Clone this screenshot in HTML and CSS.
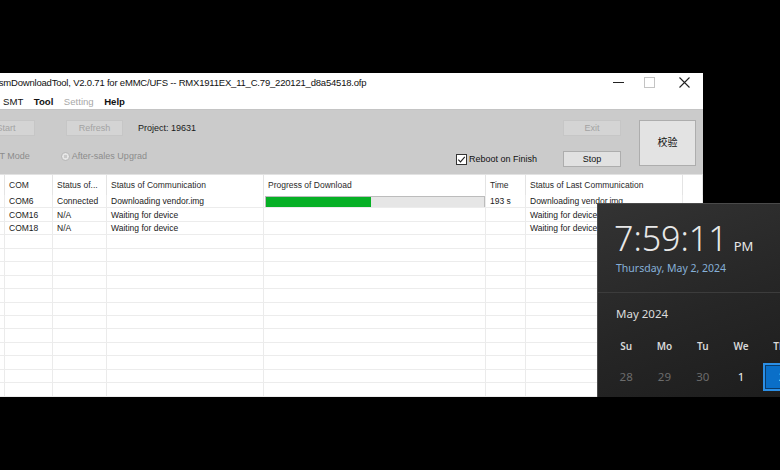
FILE: index.html
```html
<!DOCTYPE html>
<html lang="en">
<head>
    <meta charset="UTF-8">
    <title>MsmDownloadTool</title>
    <link rel="stylesheet" href="styles.css">
</head>
<body>
    <div class="window">
        <div class="titlebar">
            <span class="title">MsmDownloadTool, V2.0.71 for eMMC/UFS -- RMX1911EX_11_C.79_220121_d8a54518.ofp</span>
            <div class="caption">
                <span class="cap-btn cap-min">
                    <svg width="11" height="11" viewBox="0 0 11 11"><path d="M0 5.5h11" stroke="#222" stroke-width="1"/></svg>
                </span>
                <span class="cap-btn cap-max">
                    <svg width="11" height="11" viewBox="0 0 11 11"><rect x="0.5" y="0.5" width="10" height="10" fill="none" stroke="#c4c4c4"/></svg>
                </span>
                <span class="cap-btn cap-close">
                    <svg width="11" height="11" viewBox="0 0 11 11"><path d="M0.5 0.5l10 10M10.5 0.5l-10 10" stroke="#222" stroke-width="1.1"/></svg>
                </span>
            </div>
        </div>

        <div class="menubar">
            <span>SMT</span>
            <span class="menu-bold">Tool</span>
            <span class="menu-off">Setting</span>
            <span class="menu-bold">Help</span>
        </div>

        <div class="toolbar">
            <div class="tool-main">
                <div class="tool-row">
                    <button class="btn btn-off btn-start">Start</button>
                    <button class="btn btn-off btn-refresh">Refresh</button>
                    <span class="project">Project: 19631</span>
                    <button class="btn btn-off btn-exit">Exit</button>
                </div>
                <div class="tool-row">
                    <span class="mode">SMT Mode</span>
                    <label class="radio"><span class="radio-dot"></span>After-sales Upgrad</label>
                    <label class="check">
                        <svg width="11" height="11" viewBox="0 0 11 11"><rect x="0.5" y="0.5" width="10" height="10" fill="#fff" stroke="#333"/><path d="M2.3 5.6l2.2 2.3 4.3-5" fill="none" stroke="#222" stroke-width="1.1"/></svg>
                        Reboot on Finish
                    </label>
                    <button class="btn btn-stop">Stop</button>
                </div>
            </div>
            <button class="btn btn-big">校验</button>
        </div>

        <div class="grid">
            <div class="row head">
                <span></span><span>COM</span><span>Status of...</span><span>Status of Communication</span><span>Progress of Download</span><span>Time</span><span>Status of Last Communication</span><span></span>
            </div>
            <div class="row">
                <span></span><span>COM6</span><span>Connected</span><span>Downloading vendor.img</span>
                <span class="progress-cell"><span class="progress"><span class="progress-fill" style="width: 48%"></span></span></span>
                <span>193 s</span><span>Downloading vendor.img</span><span></span>
            </div>
            <div class="row">
                <span></span><span>COM16</span><span>N/A</span><span>Waiting for device</span><span></span><span></span><span>Waiting for device</span><span></span>
            </div>
            <div class="row">
                <span></span><span>COM18</span><span>N/A</span><span>Waiting for device</span><span></span><span></span><span>Waiting for device</span><span></span>
            </div>
            <div id="emptyRows"></div>
        </div>
    </div>

    <div class="flyout">
        <div class="clock">
            <span class="time">7:59:11</span><span class="ampm">PM</span>
        </div>
        <div class="date">Thursday, May 2, 2024</div>
        <div class="cal">
            <div class="month">May 2024</div>
            <div class="days">
                <span class="dow">Su</span><span class="dow">Mo</span><span class="dow">Tu</span><span class="dow">We</span><span class="dow">Th</span>
                <span class="day other">28</span><span class="day other">29</span><span class="day other">30</span><span class="day">1</span><span class="day today">2</span>
            </div>
        </div>
    </div>

    <script>
        // fill the rest of the list with blank grid rows
        const holder = document.getElementById('emptyRows');
        for (let i = 0; i < 12; i++) {
            const row = document.createElement('div');
            row.className = 'row';
            row.innerHTML = '<span></span>'.repeat(8);
            holder.appendChild(row);
        }
    </script>
</body>
</html>
```

FILE: styles.css
```css
* {
    box-sizing: border-box;
    margin: 0;
    padding: 0;
}

body {
    width: 780px;
    height: 470px;
    overflow: hidden;
    position: relative;
    background-color: #000;
    font-family: "Liberation Sans", Arial, sans-serif;
    color: #111;
}

.window {
    width: 703px;
    height: 324px;
    margin-top: 73px;
    background-color: #fff;
    overflow: hidden;
}

/* title bar */
.titlebar {
    height: 19px;
    display: flex;
    align-items: center;
}

.title {
    flex: 1;
    margin-left: -9px;
    font-size: 9.5px;
    letter-spacing: -0.2px;
    white-space: nowrap;
    overflow: hidden;
}

.caption {
    display: flex;
    height: 19px;
}

.cap-btn {
    display: flex;
    align-items: center;
    justify-content: center;
}

.cap-min { width: 30px; }
.cap-max { width: 32px; }
.cap-close { width: 38px; }

/* menu */
.menubar {
    height: 17px;
    display: flex;
    align-items: center;
    gap: 10.5px;
    padding: 1px 0 0 3px;
    font-size: 9.6px;
}

.menu-bold {
    font-weight: bold;
}

.menu-off {
    color: #a8a8a8;
}

/* toolbar */
.toolbar {
    height: 66px;
    display: flex;
    padding: 10px 7px 0 0;
    background-color: #cbcbcb;
    border-top: 1px solid #c4c4c4;
    border-bottom: 1px solid #e2e2e2;
    font-size: 9px;
}

.tool-main {
    flex: 1;
    display: flex;
    flex-direction: column;
    gap: 15px;
}

.tool-row {
    height: 16px;
    display: flex;
    align-items: center;
}

.btn {
    height: 16px;
    width: 58px;
    font-family: inherit;
    font-size: 9px;
    color: #111;
    background-color: #e1e1e1;
    border: 1px solid #adadad;
}

.btn-off {
    color: #a3a3a3;
    background-color: #d4d4d4;
    border-color: #c6c6c6;
}

.btn-start {
    margin-left: -23px;
}

.btn-refresh {
    width: 57px;
    margin-left: 31px;
}

.project {
    margin-left: 15px;
    color: #1a1a1a;
}

.btn-exit {
    margin-left: auto;
}

.mode {
    margin-left: -14px;
    margin-bottom: 6px;
    color: #8c8c8c;
}

.radio {
    display: flex;
    align-items: center;
    gap: 2px;
    margin: 0 0 6px 31px;
    color: #8c8c8c;
}

.radio-dot {
    width: 9px;
    height: 9px;
    border-radius: 50%;
    border: 1px solid #b8b8b8;
    background: radial-gradient(circle, #c9c9c9 30%, #e6e6e6 40%);
}

.check {
    width: 107px;
    margin-left: auto;
    display: flex;
    align-items: center;
    gap: 2px;
    color: #111;
}

.btn-big {
    width: 57px;
    height: 46px;
    margin-left: 18px;
    padding-bottom: 4px;
    font-family: "Noto Sans CJK SC", sans-serif;
    font-size: 10px;
    background-color: #e3e3e3;
}

/* list */
.grid {
    font-size: 8.5px;
    color: #1a1a1a;
}

.row {
    display: grid;
    grid-template-columns: 5px 48px 54px 157px 222px 40px 157px 1fr;
    height: 13.45px;
    border-bottom: 1px solid #ececec;
}

.row > span {
    display: flex;
    align-items: center;
    padding-left: 4px;
    border-right: 1px solid #ebebeb;
    white-space: nowrap;
    overflow: hidden;
}

.row.head {
    height: 20px;
    border-bottom: none;
    color: #2a2a2a;
}

.row.head > span {
    border-right-color: #e4e4e4;
}

.row > .progress-cell {
    padding: 1px 0 0 1px;
}

.progress {
    flex: 1;
    height: 12px;
    background-color: #e6e6e6;
    border: 1px solid #bcbcbc;
    display: flex;
}

.progress-fill {
    height: 100%;
    background-color: #06b025;
}

/* clock flyout */
.flyout {
    position: absolute;
    left: 597px;
    top: 203px;
    width: 190px;
    height: 194px;
    background: linear-gradient(160deg, #333 0%, #262626 55%, #1d1d1d 100%);
    border-left: 1px solid #4a4a4a;
    border-top: 1px solid #4a4a4a;
    color: #e8e8e8;
    font-family: "Noto Sans", "Open Sans", sans-serif;
}

.clock {
    padding: 13px 0 0 16px;
    display: flex;
    align-items: baseline;
    height: 57px;
}

.time {
    font-size: 34px;
    font-weight: 300;
    line-height: 42px;
}

.ampm {
    font-size: 13px;
    margin-left: 6px;
}

.date {
    padding-left: 18px;
    font-size: 10.5px;
    color: #86b0d8;
    height: 31px;
}

.cal {
    border-top: 1px solid #3c3c3c;
    padding: 13px 0 0 18px;
}

.month {
    font-size: 11.5px;
    color: #dcdcdc;
    height: 24px;
}

.days {
    display: grid;
    grid-template-columns: repeat(5, 38.3px);
    grid-auto-rows: 31px;
    margin-left: -9px;
    align-items: center;
    justify-items: center;
}

.dow {
    font-size: 10px;
    font-weight: 600;
    color: #d8d8d8;
}

.day {
    font-size: 11.5px;
    color: #f2f2f2;
}

.day.other {
    color: #6c6c6c;
}

.day.today {
    width: 38px;
    height: 28px;
    margin-left: 6px;
    display: flex;
    align-items: center;
    justify-content: center;
    font-weight: 600;
    color: #fff;
    background-color: #0a6fc8;
    border: 2px solid #2b8fe6;
    box-shadow: inset 0 0 0 1px #0a3c6b;
}
```
